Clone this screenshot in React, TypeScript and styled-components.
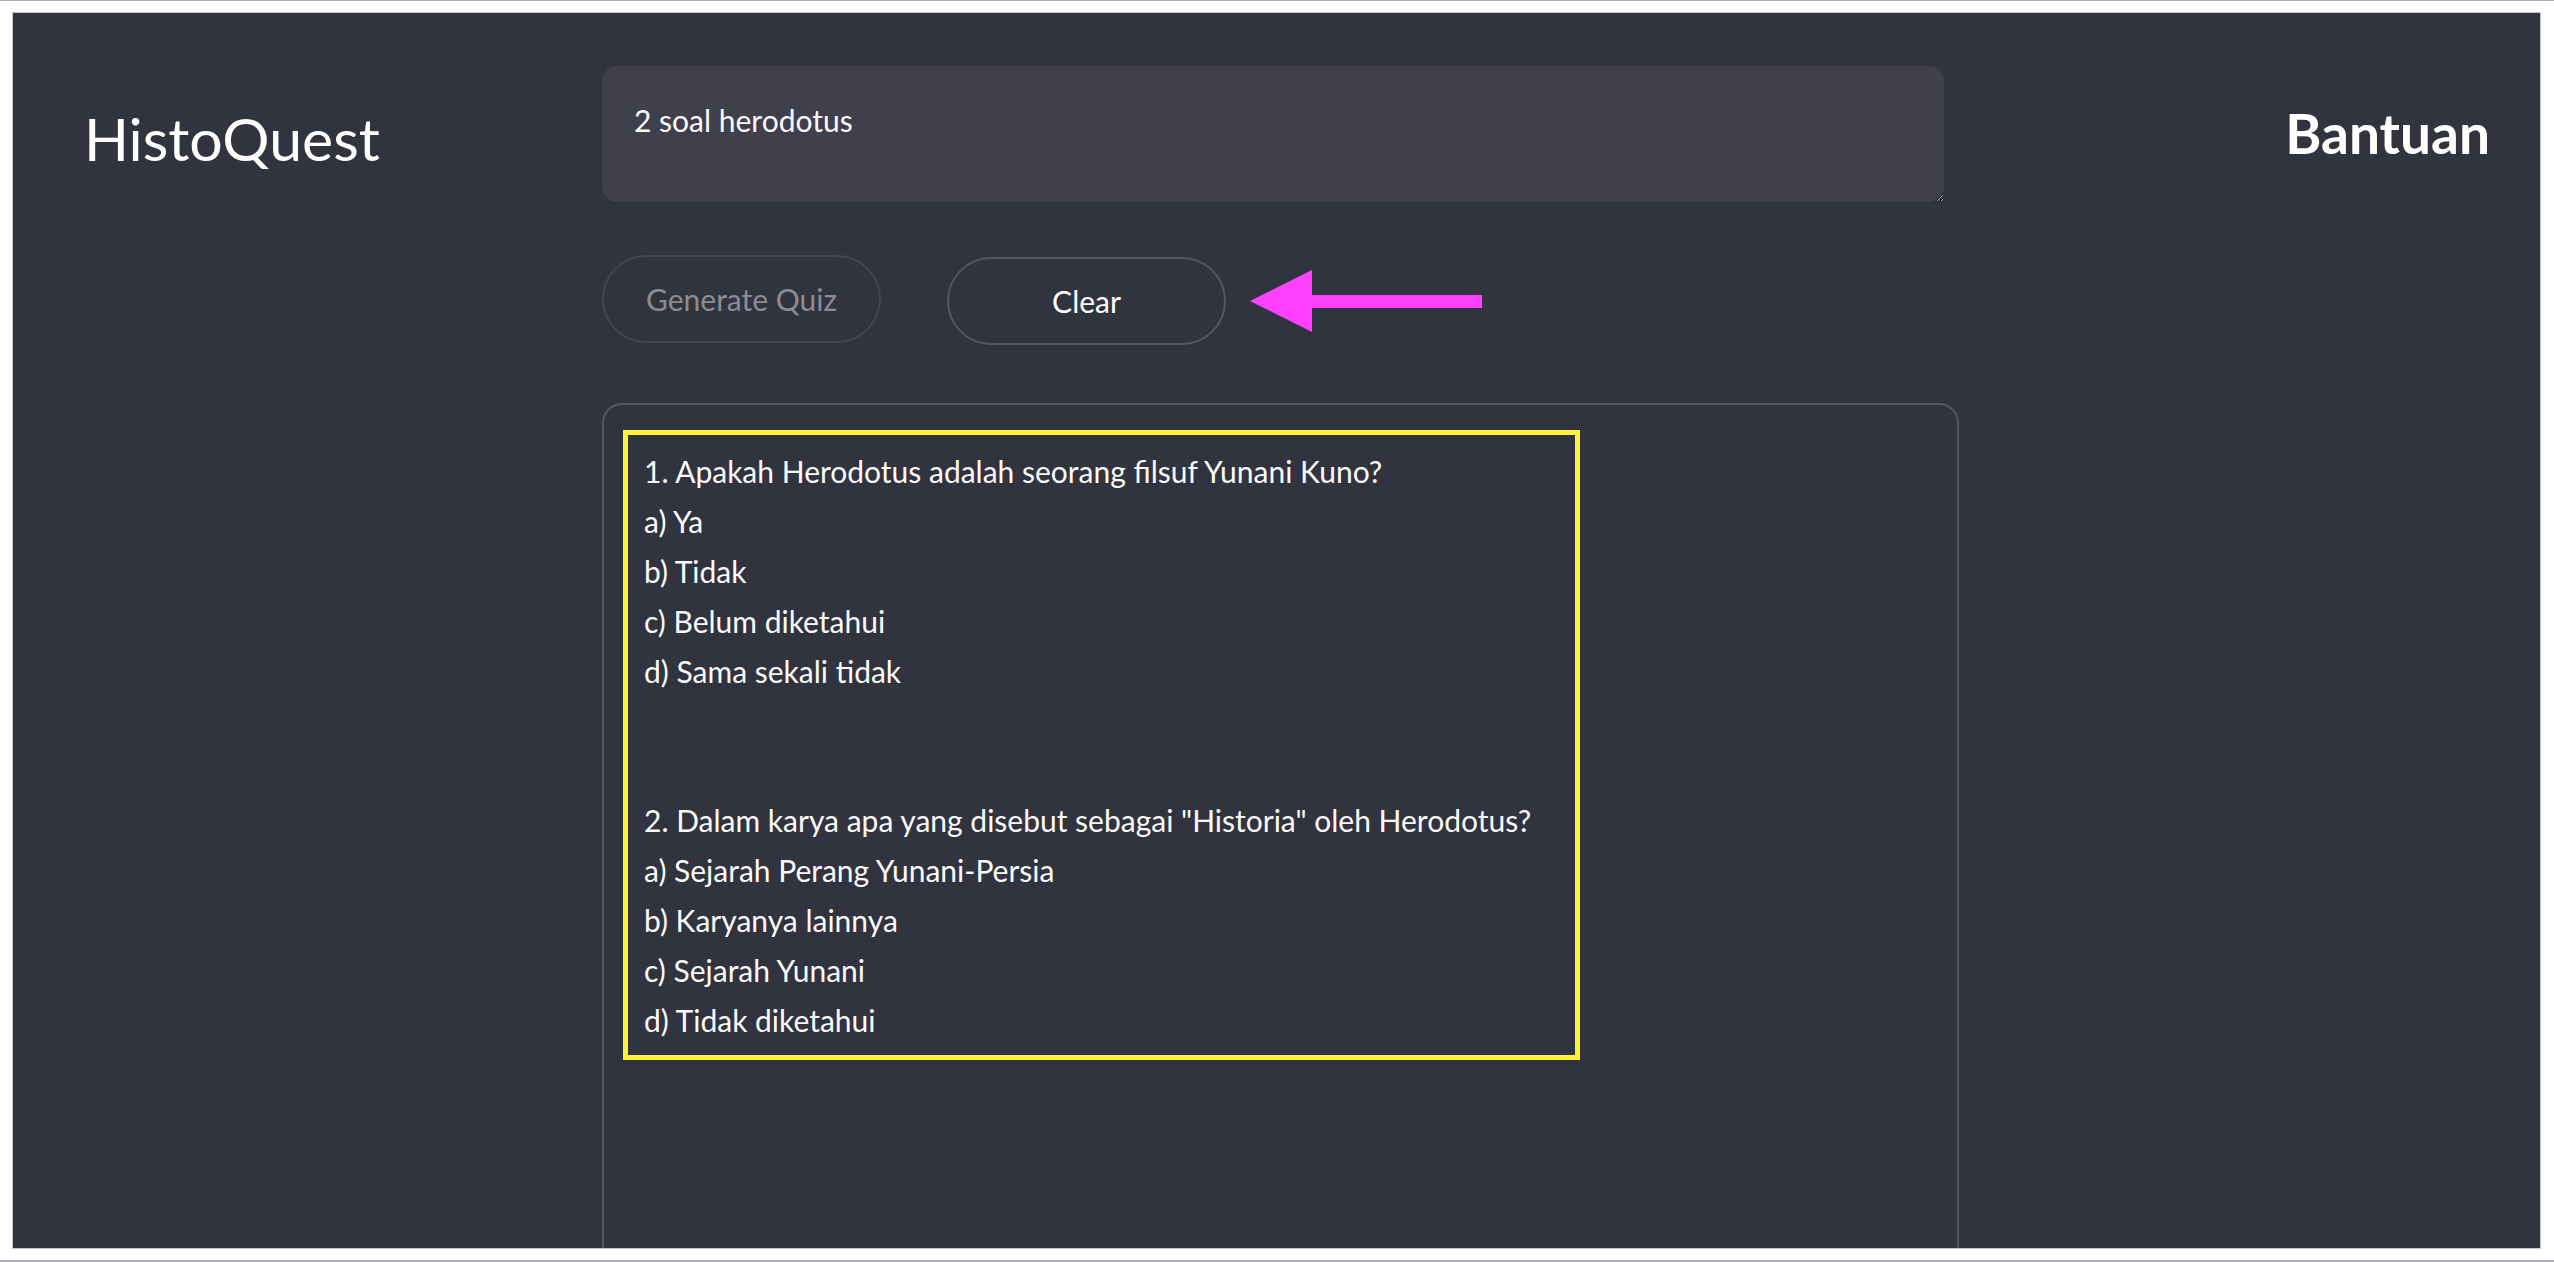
import React from "react";
import styled, { createGlobalStyle } from "styled-components";

const GlobalStyle = createGlobalStyle`
  html, body {
    margin: 0;
    padding: 0;
    background: #ffffff;
    font-family: Lato, "Open Sans", "Noto Sans", sans-serif;
  }
  * { box-sizing: border-box; }
`;

const Frame = styled.div`
  height: 1262px;
  border-top: 1px solid #a9abb3;
  border-bottom: 2px solid #a9abb3;
  padding: 11px 13px 11px 12px;
  background: #ffffff;
`;

const Panel = styled.div`
  height: 100%;
  border: 1px solid #c4c6cc;
  background: #31333f;
  overflow: hidden;
  display: grid;
  grid-template-columns: 589px 1357px 1fr;
  color: #ffffff;
`;

const Brand = styled.div`
  padding: 91px 0 0 71px;
  font-size: 59px;
  font-weight: 400;
  line-height: 1.2;
  color: #ffffff;
`;

const Main = styled.main`
  padding-top: 53px;
  display: flex;
  flex-direction: column;
  align-items: flex-start;
`;

const Prompt = styled.textarea`
  width: 1342px;
  height: 136px;
  flex-shrink: 0;
  border: none;
  outline: none;
  border-radius: 15px;
  background: #403f4c;
  color: #fafafa;
  font-family: inherit;
  font-size: 30px;
  line-height: 1.6;
  padding: 30px 32px;
  resize: vertical;
  color-scheme: dark;
`;

const ButtonRow = styled.div`
  margin-top: 53px;
  display: flex;
  align-items: flex-start;
  flex-shrink: 0;
`;

const PillButton = styled.button<{ $active?: boolean }>`
  width: 279px;
  height: 88px;
  border-radius: 44px;
  background: transparent;
  border: 2px solid ${(p) => (p.$active ? "#56565d" : "#45464f")};
  color: ${(p) => (p.$active ? "#ffffff" : "#8b8c94")};
  font-family: inherit;
  font-size: 30px;
  display: flex;
  align-items: center;
  justify-content: center;
  padding: 0;
  margin-right: ${(p) => (p.$active ? "0" : "66px")};
  margin-top: ${(p) => (p.$active ? "2px" : "0")};
  cursor: pointer;
`;

const Arrow = styled.svg`
  margin-left: 24px;
  margin-top: 15px;
  display: block;
`;

const Output = styled.section`
  margin-top: 58px;
  width: 1357px;
  height: 1000px;
  flex-shrink: 0;
  border: 2px solid #55565f;
  border-radius: 20px;
  padding: 25px 19px;
`;

const QuizBox = styled.div`
  width: 957px;
  border: 5px solid #fff23a;
  padding: 12px 16px 9px;
  font-size: 30px;
  line-height: 49.9px;
  white-space: pre-line;
  color: #fafafa;
`;

const Side = styled.div`
  display: flex;
  justify-content: flex-end;
  align-items: flex-start;
  padding: 87px 50px 0 0;
`;

const HelpLink = styled.a`
  font-size: 55px;
  font-weight: 700;
  line-height: 1.2;
  color: #ffffff;
  text-decoration: none;
`;

const quiz = `1. Apakah Herodotus adalah seorang filsuf Yunani Kuno?
a) Ya
b) Tidak
c) Belum diketahui
d) Sama sekali tidak


2. Dalam karya apa yang disebut sebagai "Historia" oleh Herodotus?
a) Sejarah Perang Yunani-Persia
b) Karyanya lainnya
c) Sejarah Yunani
d) Tidak diketahui`;

export default function App() {
  return (
    <>
      <GlobalStyle />
      <Frame>
        <Panel>
          <Brand>HistoQuest</Brand>
          <Main>
            <Prompt readOnly defaultValue="2 soal herodotus" />
            <ButtonRow>
              <PillButton>Generate Quiz</PillButton>
              <PillButton $active>Clear</PillButton>
              <Arrow width="232" height="62" viewBox="0 0 232 62">
                <polygon
                  points="0,31 62,0 62,25 232,25 232,38 62,38 62,62"
                  fill="#ff40ff"
                />
              </Arrow>
            </ButtonRow>
            <Output>
              <QuizBox>{quiz}</QuizBox>
            </Output>
          </Main>
          <Side>
            <HelpLink href="#">Bantuan</HelpLink>
          </Side>
        </Panel>
      </Frame>
    </>
  );
}
